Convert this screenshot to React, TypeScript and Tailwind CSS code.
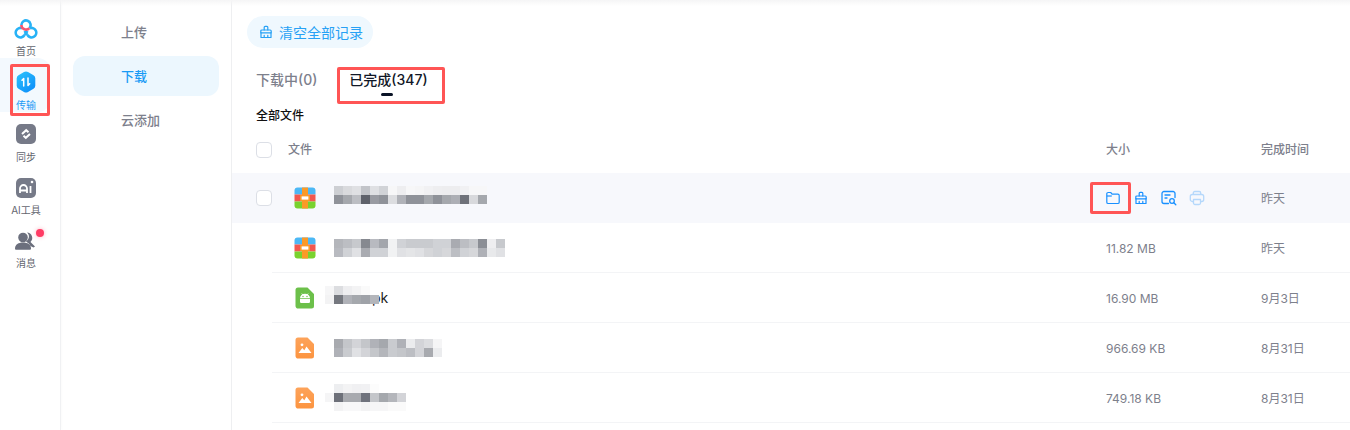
import type { ReactNode } from 'react';

type FileRow = {
  kind: 'zip' | 'apk' | 'image';
  size: string;
  time: string;
  mosaic: string[][];
  suffix?: string;
  offset: string;
};

const files: FileRow[] = [
  {
    kind: 'zip',
    size: '',
    time: '昨天',
    offset: 'ml-[18px] mt-[-6px]',
    mosaic: [
      ['#cdcfd3', '#d9dadd', '#dfe0e3', '#c2c4c9', '#dfe0e3', '#d1d3d7', '#f7f7f8', '#eeeef0', '#f7f7f8', '#f5f5f6', '#f1f1f3', '#eeeef0', '#ededef', '#ededef', '#f1f1f3', '#f7f7f8', '#f7f7f8'],
      ['#8f9299', '#a5a8ad', '#bcbec3', '#5f626b', '#999ba2', '#8f9299', '#dcdde0', '#b0b2b8', '#8f9299', '#8f9299', '#a5a8ad', '#8f9299', '#a5a8ad', '#adafb5', '#6f727a', '#d8d9dc', '#a5a8ad'],
    ],
  },
  {
    kind: 'zip',
    size: '11.82 MB',
    time: '昨天',
    offset: 'ml-[18px]',
    mosaic: [
      ['#b4b6bb', '#bcbec3', '#c7c9cd', '#868990', '#b8bac0', '#a3a6ac', '#f1f2f3', '#d0d2d6', '#c9cbcf', '#c9cbcf', '#c9cbcf', '#d0d2d6', '#d0d2d6', '#a9abb1', '#bcbec3', '#c7c9cd', '#8b8e95', '#eeeef0', '#c7c9cd'],
      ['#b8bac0', '#d0d2d6', '#e0e1e4', '#a9abb1', '#d0d2d6', '#d0d2d6', '#f1f2f3', '#e0e1e4', '#e4e5e7', '#e0e1e4', '#d6d7da', '#d0d2d6', '#d6d7da', '#bcbec3', '#d0d2d6', '#d6d7da', '#aeb0b6', '#e8e9eb', '#e0e1e4'],
    ],
  },
  {
    kind: 'apk',
    size: '16.90 MB',
    time: '9月3日',
    offset: 'ml-[9px] mt-[-6px]',
    suffix: 'pk',
    mosaic: [
      ['#f6f6f7', '#dcdde0', '#eeeef0', '#f3f3f4', '#fafafa', '#ffffff'],
      ['#f3f3f4', '#75787f', '#b0b2b8', '#a5a8ad', '#9fa2a8', '#b4b6bb'],
    ],
  },
  {
    kind: 'image',
    size: '966.69 KB',
    time: '8月31日',
    offset: 'ml-[18px]',
    mosaic: [
      ['#a8aaaf', '#c4c6ca', '#d3d4d8', '#c4c6ca', '#b0b2b8', '#a5a8ad', '#c9cbcf', '#afb1b7', '#ebecee', '#d3d4d8', '#dcdde0', '#f5f5f6'],
      ['#afb1b7', '#c9cbcf', '#e0e1e4', '#d3d4d8', '#c4c6ca', '#b4b6bb', '#c9cbcf', '#c4c6ca', '#bcbec3', '#d3d4d8', '#a8aaaf', '#ebecee'],
    ],
  },
  {
    kind: 'image',
    size: '749.18 KB',
    time: '8月31日',
    offset: 'ml-[9px]',
    mosaic: [
      ['#ffffff', '#edeef0', '#f3f3f4', '#f0f0f2', '#f1f1f3', '#fcfcfc', '#ffffff', '#ffffff', '#ffffff'],
      ['#f5f5f6', '#6d7079', '#a8aaaf', '#a8aaaf', '#6f727c', '#c4c6ca', '#a5a8ad', '#b4b6bb', '#d3d4d8'],
      ['#ffffff', '#f3f3f4', '#f8f8f9', '#f8f8f9', '#f3f3f4', '#f6f6f7', '#f6f6f7', '#fafafa', '#fafafa'],
    ],
  },
];

const Mosaic = ({ rows }: { rows: string[][] }) => (
  <div className="relative z-10 flex flex-col">
    {rows.map((row, i) => (
      <div key={i} className="flex">
        {row.map((color, j) => (
          <span key={j} className="h-[9px] w-[9px]" style={{ backgroundColor: color }} />
        ))}
      </div>
    ))}
  </div>
);

const Checkbox = () => <span className="h-4 w-4 rounded-[4px] border border-[#dcdfe6] bg-white" />;

const FileIcon = ({ kind }: { kind: FileRow['kind'] }) => {
  if (kind === 'zip') {
    return (
      <svg width="22" height="22" viewBox="0 0 22 22">
        <defs>
          <clipPath id="zipClip">
            <rect x="0.5" y="0.5" width="21" height="21" rx="3" />
          </clipPath>
        </defs>
        <g clipPath="url(#zipClip)">
          <rect width="22" height="7.5" fill="#4cb8f5" />
          <rect y="7.5" width="22" height="7" fill="#f2584f" />
          <rect y="14.5" width="22" height="7.5" fill="#79d22e" />
          <rect x="8" width="6" height="22" fill="#fb9a27" />
          <rect x="6" y="8" width="10" height="6" rx="1" fill="#fb9a27" />
          <rect x="7.6" y="9.4" width="6.8" height="3.2" fill="#fff" />
        </g>
      </svg>
    );
  }
  if (kind === 'apk') {
    return (
      <svg width="20" height="22" viewBox="0 0 20 22">
        <path d="M3 .5h9.500L19 7v12a2.500 2.500 0 0 1-2.500 2.500h-13A2.500 2.500 0 0 1 .5 19V3A2.500 2.500 0 0 1 3 .5z" fill="#6cc04a" />
        <path d="M6.800 6.500l1.200 1.800M13.200 6.500L12 8.300" stroke="#fff" strokeWidth=".8" />
        <path d="M5 11.200a5 4.400 0 0 1 10 0z" fill="#fff" />
        <path d="M5 12h10v2.800a1.200 1.200 0 0 1-1.200 1.200H6.200A1.200 1.200 0 0 1 5 14.800z" fill="#fff" />
        <circle cx="8" cy="9.500" r=".7" fill="#6cc04a" />
        <circle cx="12" cy="9.500" r=".7" fill="#6cc04a" />
      </svg>
    );
  }
  return (
    <svg width="20" height="22" viewBox="0 0 20 22">
      <defs>
        <linearGradient id="imgGrad" x1="0" y1="0" x2="0" y2="1">
          <stop offset="0" stopColor="#fda35a" />
          <stop offset="1" stopColor="#fc9440" />
        </linearGradient>
      </defs>
      <path d="M3 .5h9.500L19 7v12a2.500 2.500 0 0 1-2.500 2.500h-13A2.500 2.500 0 0 1 .5 19V3A2.500 2.500 0 0 1 3 .5z" fill="url(#imgGrad)" />
      <circle cx="7" cy="7.800" r="1.400" fill="#fff" />
      <path d="M3.500 16l3.800-5 2 2.200 2.200-3.700 5 6.500z" fill="#fff" />
    </svg>
  );
};

const BroomIcon = ({ color }: { color: string }) => (
  <svg width="16" height="16" viewBox="0 0 16 16" fill="none" stroke={color} strokeWidth="1.200" strokeLinejoin="round" strokeLinecap="round">
    <path d="M6.200 6V3.200a.9.900 0 0 1 .9-.900h1.800a.9.900 0 0 1 .9.900V6" />
    <path d="M3.800 6h8.400a1 1 0 0 1 1 1v1.800H2.800V7a1 1 0 0 1 1-1z" />
    <path d="M3 8.800v4.700h10V8.800" />
    <path d="M6.200 13.300v-2M9.800 13.300v-2" />
  </svg>
);

const ActionIcons = () => (
  <div className="absolute left-[873px] top-0 flex h-full items-center gap-3">
    <svg width="16" height="16" viewBox="0 0 16 16" fill="none" stroke="#1890ff" strokeWidth="1.200" strokeLinejoin="round">
      <path d="M1.800 5V3.800a1.300 1.300 0 0 1 1.300-1.300h2.600l1.400 1.600h5.800a1.300 1.300 0 0 1 1.300 1.300v6.800a1.300 1.300 0 0 1-1.300 1.300H3.100a1.300 1.300 0 0 1-1.300-1.300z" />
      <path d="M1.800 6h5" />
    </svg>
    <BroomIcon color="#1890ff" />
    <svg width="16" height="16" viewBox="0 0 16 16" fill="none" stroke="#1890ff" strokeWidth="1.300" strokeLinecap="round">
      <path d="M14 7.500V3.500a2 2 0 0 0-2-2H3a2 2 0 0 0-2 2v8a2 2 0 0 0 2 2h4.500" />
      <path d="M4 5h5M4 8h2" />
      <circle cx="11" cy="11" r="2.300" />
      <path d="M12.800 12.800l2 2" />
    </svg>
    <svg width="16" height="16" viewBox="0 0 16 16" fill="none" stroke="#b5d8fb" strokeWidth="1.300" strokeLinejoin="round">
      <path d="M4.300 4.500V3a1.500 1.500 0 0 1 1.500-1.500h4.400A1.500 1.500 0 0 1 11.700 3v1.500" />
      <rect x="1.300" y="4.500" width="13.400" height="7" rx="2" />
      <path d="M4.500 9.500h7v3.500a1.500 1.500 0 0 1-1.500 1.500H6A1.500 1.500 0 0 1 4.500 13z" fill="#f7f8fc" />
    </svg>
  </div>
);

const NavItem = ({ icon, label, active }: { icon: ReactNode; label: string; active?: boolean }) => (
  <div className="flex h-[53px] w-full flex-col items-center">
    <div className={`flex items-end justify-center ${active ? 'h-[33px]' : 'h-[32px]'}`}>{icon}</div>
    <span className={`mt-[5px] text-[10px] leading-[14px] ${active ? 'text-[#1a9bf5]' : 'text-[#63666f]'}`}>{label}</span>
  </div>
);

const HomeIcon = () => (
  <svg width="24" height="20" viewBox="0 0 24 20" fill="none" strokeWidth="2.600">
    <path d="M8 9.200a4.700 4.700 0 1 0 2.500 6.800M16 9.200a4.700 4.700 0 1 1-2.500 6.800" stroke="#27b2f6" />
    <path d="M10.500 16l3-4M13.500 16l-3-4" stroke="#27b2f6" />
    <path d="M7.400 6a4.600 4.600 0 1 1 8 3.100" stroke="#27b2f6" />
    <path d="M7.400 6a4.600 4.600 0 0 0 8 3.100" stroke="#f25672" />
  </svg>
);

const TransferIcon = () => (
  <svg width="20" height="22" viewBox="0 0 20 22">
    <defs>
      <linearGradient id="hexGrad" x1="0" y1="0" x2="0.800" y2="1">
        <stop offset="0" stopColor="#2bc4fb" />
        <stop offset="1" stopColor="#0f8ffa" />
      </linearGradient>
    </defs>
    <path d="M8 1.100a4 4 0 0 1 4 0l5.500 3.200a3.500 3.500 0 0 1 1.800 3v7.400a3.500 3.500 0 0 1-1.800 3L12 20.900a4 4 0 0 1-4 0l-5.500-3.200a3.500 3.500 0 0 1-1.800-3V7.300a3.500 3.500 0 0 1 1.800-3z" fill="url(#hexGrad)" />
    <path d="M7.700 15V7.500L6 9.200M12 7v7.500l1.700-1.700" stroke="#fff" strokeWidth="1.500" fill="none" strokeLinecap="round" strokeLinejoin="round" />
  </svg>
);

const SyncIcon = () => (
  <svg className="mb-px" width="20" height="20" viewBox="0 0 20 20">
    <rect width="20" height="20" rx="5" fill="#767a88" />
    <path d="M6 10l4.200-3.800 2.300 2M14 10l-4.200 3.800-2.300-2" stroke="#fff" strokeWidth="2" fill="none" />
  </svg>
);

const AiIcon = () => (
  <svg width="20" height="20" viewBox="0 0 20 20">
    <rect width="20" height="20" rx="5" fill="#767a88" />
    <circle cx="16" cy="4" r="1.300" fill="#fff" />
    <path d="M4 15v-4.500a3.500 3.500 0 0 1 7 0V15M4 12.500h7" stroke="#fff" strokeWidth="1.800" fill="none" />
    <path d="M14.500 8v7" stroke="#fff" strokeWidth="1.800" />
  </svg>
);

const MessageIcon = () => (
  <svg width="22" height="20" viewBox="0 0 22 20" fill="#6b6f7d">
    <path d="M12 1.500a5.500 5.500 0 0 1 3.500 9.500l4.500 4.500-1.500 1-3-1.500C14 12 11 11 11 10a5 5 0 0 0 1-8.500z" />
    <circle cx="8" cy="6.500" r="4.800" />
    <path d="M0 17.500c0-4 3.500-6 8-6s8 2 8 6c0 .8-.5 1.300-1.300 1.300H1.300C.5 18.800 0 18.300 0 17.500z" />
  </svg>
);

const App = () => (
  <div className="relative flex h-[430px] w-[1350px] overflow-hidden bg-white font-['Inter','Noto_Sans_CJK_SC',sans-serif]">
    <div className="pointer-events-none absolute inset-x-0 top-0 h-[6px] bg-gradient-to-b from-[#f5f5f6] to-white/0" />

    <aside className="w-[61px] shrink-0 border-r border-[#f0f1f3] pr-2 pt-[7px] shadow-[1px_0_3px_rgba(0,0,0,0.02)]">
      <NavItem icon={<HomeIcon />} label="首页" />
      <div className="relative w-full">
        <span className="absolute left-0 top-[-2px] h-[54px] w-[50px] rounded-r-[12px] bg-[#f3f9fe]" />
        <div className="relative">
          <NavItem icon={<TransferIcon />} label="传输" active />
        </div>
      </div>
      <NavItem icon={<SyncIcon />} label="同步" />
      <NavItem icon={<AiIcon />} label="AI工具" />
      <div className="relative w-full">
        <NavItem icon={<MessageIcon />} label="消息" />
        <span className="absolute left-[36px] top-[10px] h-2 w-2 rounded-full bg-[#ff3b64] shadow-[0_0_4px_rgba(255,59,100,0.4)]" />
      </div>
    </aside>

    <nav className="flex w-[171px] shrink-0 flex-col border-r border-[#eeeff1] px-3 pt-3 text-[13px] font-medium text-[#7d808c]">
      <div className="flex h-[40px] items-center pl-[48px] pt-[2px]">上传</div>
      <div className="mt-1 flex h-[40px] items-center rounded-[12px] bg-[#ecf7fe] pl-[48px] pt-[2px] text-[#1a9bf5]">下载</div>
      <div className="mt-1 flex h-[40px] items-center pl-[48px] pt-[2px]">云添加</div>
    </nav>

    <main className="min-w-0 flex-1">
      <div className="pl-[15px] pt-4">
        <button className="flex h-8 w-[126px] items-center gap-[5px] rounded-full bg-[#eff8fe] pl-[11px] text-[14px] text-[#27a1f5]">
          <BroomIcon color="#27a1f5" />
          清空全部记录
        </button>
      </div>

      <div className="mt-4 flex h-[32px] pl-6 text-[14px] font-medium">
        <span className="leading-[32px] text-[#7d808c]">下载中(0)</span>
        <div className="relative ml-[32px] leading-[32px] text-[#111827]">
          已完成(347)
          <span className="absolute left-[32px] top-[29px] h-[3px] w-3 rounded-full bg-[#0a1326]" />
        </div>
      </div>

      <div className="mt-2 h-[24px] pl-6 text-[12px] font-medium leading-[24px] text-[#111]">全部文件</div>

      <div className="relative mb-[6px] mt-[5px] flex h-[34px] items-center text-[12px] text-[#7d808c]">
        <span className="ml-6 flex">
          <Checkbox />
        </span>
        <span className="ml-4 font-medium">文件</span>
        <span className="absolute left-[874px] font-medium">大小</span>
        <span className="absolute left-[1029px] font-medium">完成时间</span>
      </div>

      {files.map((file, index) => (
        <div key={index} className={`relative flex h-[50px] items-center ${index === 0 ? 'bg-[#f7f8fc]' : ''}`}>
          {index === 0 ? (
            <span className="ml-6 flex">
              <Checkbox />
            </span>
          ) : (
            <span className="ml-10 w-0" />
          )}
          <div className={`flex h-full flex-1 items-center ${index === 0 ? '' : 'border-b border-[#f3f4f6]'}`}>
            <div className="ml-[22px] flex w-[22px] justify-center">
              <FileIcon kind={file.kind} />
            </div>
            <div className={`flex items-end ${file.offset}`}>
              <Mosaic rows={file.mosaic} />
              {file.suffix ? <span className="mb-[-3px] ml-[-7px] text-[14px] leading-[18px] text-[#222]">{file.suffix}</span> : null}
            </div>
          </div>
          {index === 0 ? <ActionIcons /> : null}
          {file.size ? <span className="absolute left-[874px] pt-[2px] text-[12px] text-[#7d808c]">{file.size}</span> : null}
          <span className="absolute left-[1029px] pt-[2px] text-[12px] text-[#7d808c]">{file.time}</span>
        </div>
      ))}
    </main>

    {/* annotation boxes drawn over the screenshot */}
    <span className="absolute left-[10px] top-[64px] h-[52px] w-[40px] rounded-[2px] border-[3px] border-[#ff5555]" />
    <span className="absolute left-[337px] top-[67px] h-[37px] w-[108px] rounded-[2px] border-[3px] border-[#ff5555]" />
    <span className="absolute left-[1090px] top-[182px] h-[32px] w-[41px] rounded-[2px] border-[3px] border-[#ff5555]" />
  </div>
);

export default App;
